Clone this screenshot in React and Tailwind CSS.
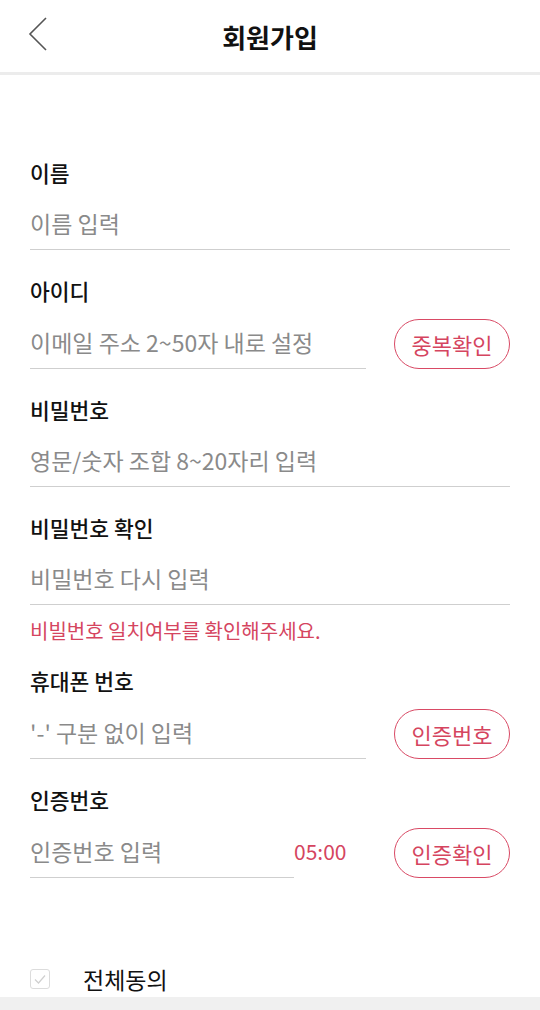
const RED = "text-[#d5455f]";

function Field({ label, placeholder, children, inputWidth = "flex-1" }) {
  return (
    <div className="mb-[28px]">
      <div className="h-[26px] text-[21.5px] leading-[26px] font-medium text-[#111]">{label}</div>
      <div className="mt-[15px] flex items-end">
        <div className={`${inputWidth} h-[49px] pb-[3px] flex items-center border-b border-[#cfcfcf] text-[23px] text-[#8a8a8a]`}>
          {placeholder}
        </div>
        {children}
      </div>
    </div>
  );
}

function PillButton({ children }) {
  return (
    <button className={`ml-auto h-[50px] w-[116px] rounded-full border-[1.5px] border-[#d94a65] text-[22px] ${RED} flex items-center justify-center`}>
      {children}
    </button>
  );
}

export default function App() {
  return (
    <main
      className="w-[540px] h-[1010px] overflow-hidden bg-white flex flex-col"
      style={{ fontFamily: '"Noto Sans CJK KR", "Noto Sans", sans-serif' }}
    >
      <header className="relative shrink-0 h-[75px] flex items-center justify-center border-b-[3px] border-[#ececec]">
        <svg className="absolute left-[28px] top-[17px]" width="20" height="34" viewBox="0 0 20 34" fill="none">
          <path d="M18 1 L2 17 L18 33" stroke="#555" strokeWidth="1.6" />
        </svg>
        <h1 className="text-[26px] font-bold text-[#111]">회원가입</h1>
      </header>

      <section className="px-[30px] pt-[85px] flex-1 min-h-0 overflow-hidden">
        <Field label="이름" placeholder="이름 입력" />
        <Field label="아이디" placeholder="이메일 주소 2~50자 내로 설정" inputWidth="w-[336px]">
          <PillButton>중복확인</PillButton>
        </Field>
        <Field label="비밀번호" placeholder="영문/숫자 조합 8~20자리 입력" />
        <div className="mb-[26px]">
          <div className="h-[26px] text-[21.5px] leading-[26px] font-medium text-[#111]">비밀번호 확인</div>
          <div className="mt-[15px] h-[49px] pb-[3px] flex items-center border-b border-[#cfcfcf] text-[23px] text-[#8a8a8a]">
            비밀번호 다시 입력
          </div>
          <p className={`mt-[15px] text-[20px] leading-[22px] ${RED}`}>비빌번호 일치여부를 확인해주세요.</p>
        </div>
        <Field label="휴대폰 번호" placeholder="'-' 구분 없이 입력" inputWidth="w-[336px]">
          <PillButton>인증번호</PillButton>
        </Field>
        <Field label="인증번호" placeholder="인증번호 입력" inputWidth="w-[264px]">
          <div className={`h-[49px] pb-[3px] flex items-center text-[21px] ${RED}`}>05:00</div>
          <PillButton>인증확인</PillButton>
        </Field>

        <label className="mt-[84px] flex items-center">
          <span className="w-[20px] h-[20px] rounded-[3px] border border-[#dcdcdc] flex items-center justify-center">
            <svg width="14" height="14" viewBox="0 0 14 14" fill="none">
              <path d="M2 7.5 L5.5 11 L12 3.5" stroke="#d0d0d0" strokeWidth="1.2" />
            </svg>
          </span>
          <span className="ml-[33px] text-[23px] text-[#111]">전체동의</span>
        </label>
      </section>

      <div className="shrink-0 h-[13px] bg-[#f0f0f0]" />
    </main>
  );
}
